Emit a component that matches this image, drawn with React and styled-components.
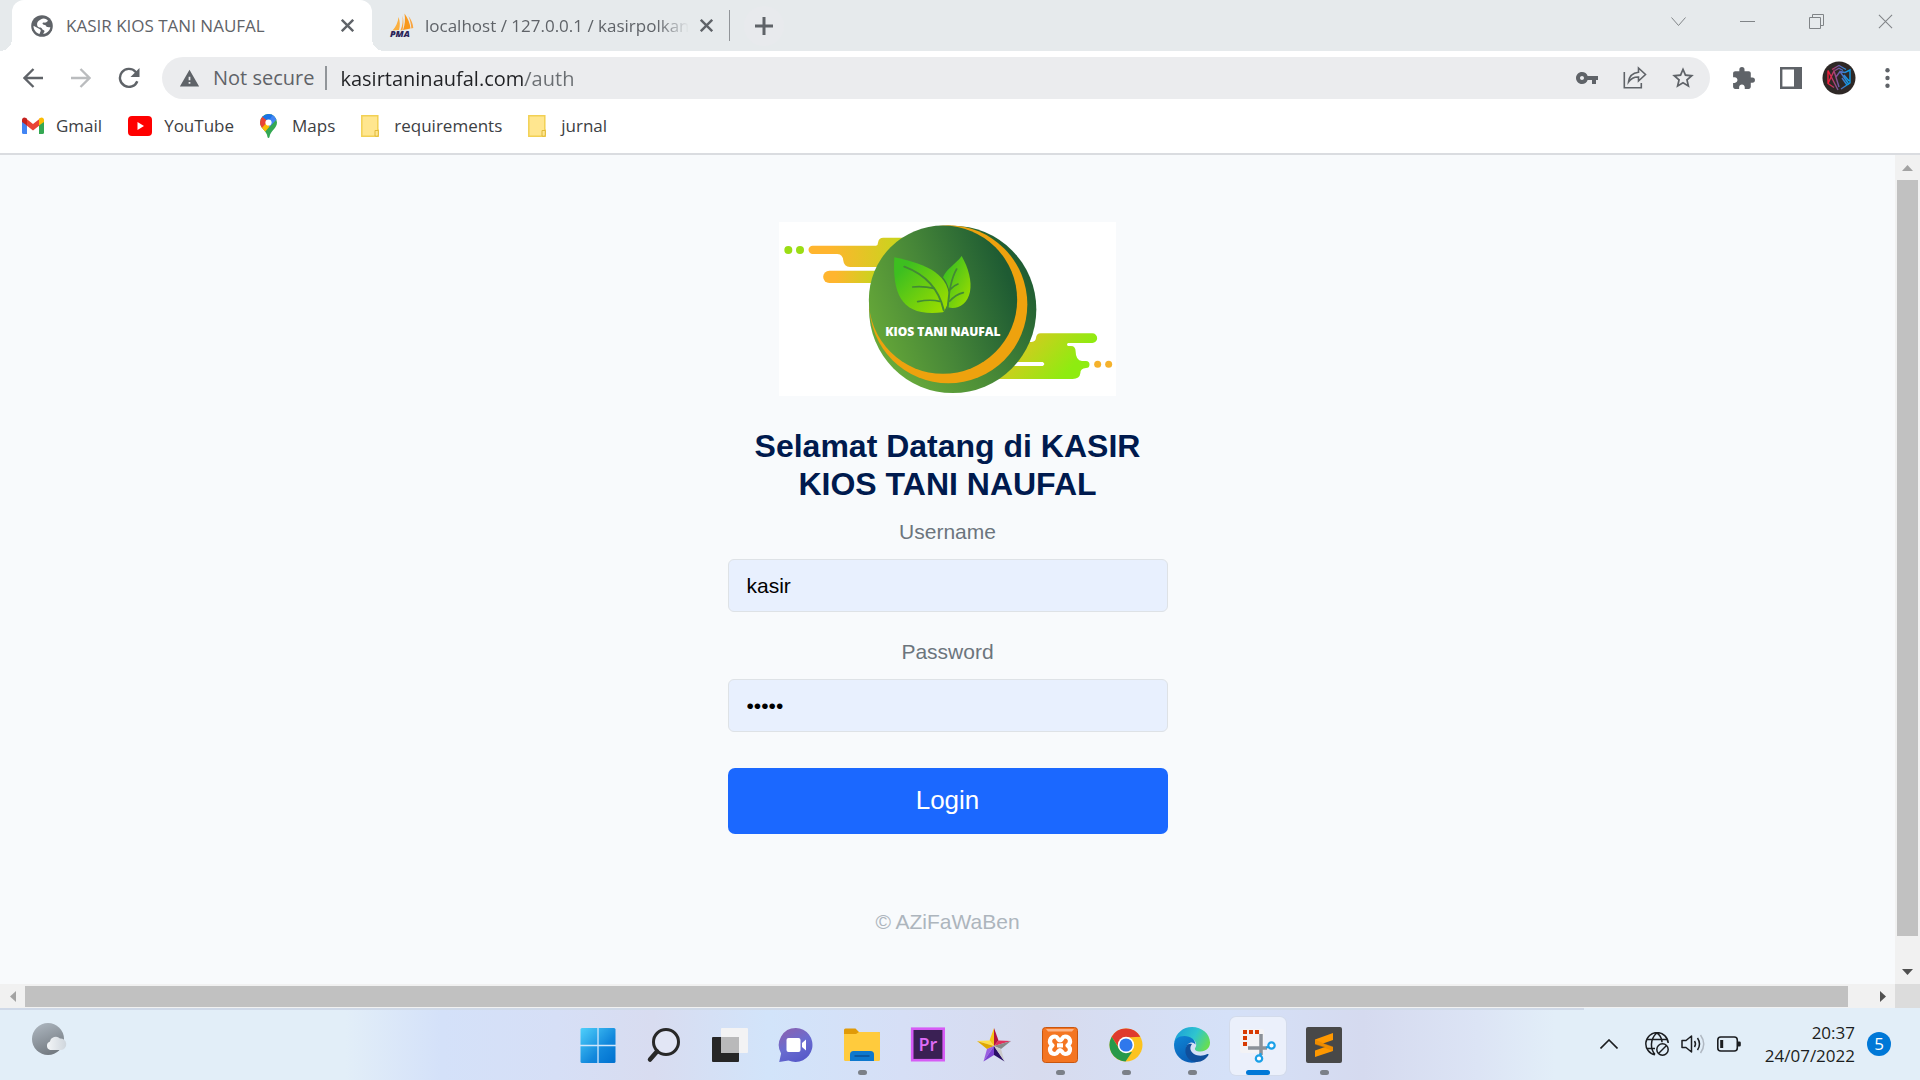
import React from "react";
import styled, { createGlobalStyle, css } from "styled-components";
import { MdVpnKey, MdStarBorder, MdExtension, MdWarning } from "react-icons/md";

const uiFont = `"Open Sans", "Noto Sans", sans-serif`;
const pageFont = `"Liberation Sans", Arial, sans-serif`;

const GlobalStyle = createGlobalStyle`
  *, *::before, *::after { box-sizing: border-box; }
  body { margin: 0; background: #fff; font-family: ${uiFont}; }
  button, input { font: inherit; color: inherit; margin: 0; }
  button { border: 0; background: none; padding: 0; cursor: pointer; }
  svg { display: block; flex: none; }
`;

const Screen = styled.div`
  display: flex;
  flex-direction: column;
  min-height: 100vh;
`;

/* ---------- Tab strip ---------- */

const TabStrip = styled.div`
  display: flex;
  align-items: stretch;
  height: 51px;
  padding-left: 12px;
  background: #e6eaec;
  color: #5f6368;
`;

const Tab = styled.div`
  position: relative;
  display: flex;
  align-items: center;
  gap: ${(p) => (p.$active ? 12 : 10)}px;
  width: ${(p) => (p.$active ? 360 : 357)}px;
  padding: 0 ${(p) => (p.$active ? 17 : 15)}px 0 18px;
  border-radius: 12px 12px 0 0;
  ${(p) =>
    p.$active &&
    css`
      background: #fff;
      &::before,
      &::after {
        content: "";
        position: absolute;
        bottom: 0;
        width: 12px;
        height: 12px;
      }
      &::before {
        left: -12px;
        background: radial-gradient(circle at 0 0, transparent 12px, #fff 12px);
      }
      &::after {
        right: -12px;
        background: radial-gradient(circle at 100% 0, transparent 12px, #fff 12px);
      }
    `}
`;

const TabTitle = styled.button`
  flex: 1;
  min-width: 0;
  overflow: hidden;
  text-align: left;
  white-space: nowrap;
  font-size: 17px;
  line-height: 24px;
  ${(p) =>
    p.$fade &&
    css`
      mask-image: linear-gradient(90deg, #000 calc(100% - 32px), transparent);
    `}
`;

const IconButton = styled.button`
  display: grid;
  place-items: center;
  width: ${(p) => p.$w || 15}px;
  height: ${(p) => p.$h || 24}px;
  flex: none;
`;

const Separator = styled.span`
  align-self: center;
  width: ${(p) => p.$w || 1}px;
  height: ${(p) => p.$h}px;
  background: #919599;
`;

const NewTab = styled.button`
  display: grid;
  place-items: center;
  align-self: center;
  width: 40px;
  height: 40px;
  margin-left: 14px;
  border-radius: 50%;
  background: #e8eaed;
`;

const WindowControls = styled.div`
  display: flex;
  margin-left: auto;
  color: #808487;
`;

const WindowButton = styled.button`
  display: grid;
  place-items: center;
  width: 69px;
  height: 43px;
`;

/* ---------- Toolbar ---------- */

const Toolbar = styled.div`
  display: flex;
  align-items: center;
  padding: 6px 9px;
  color: #5f6368;
`;

const NavButtons = styled.div`
  display: flex;
  width: 153px;
`;

const AddressBar = styled.label`
  display: flex;
  align-items: center;
  flex: 1;
  height: 42px;
  padding: 0 3px 0 17px;
  border-radius: 21px;
  background: #ebecee;
  font-size: 20px;
  line-height: 28px;
  white-space: nowrap;
`;

const SecurityNote = styled.span`
  margin: 0 11px 0 13px;
`;

const AddressInput = styled.input`
  flex: 1;
  min-width: 0;
  height: 30px;
  margin-left: 13px;
  padding: 0;
  border: 0;
  outline: 0;
  background: linear-gradient(90deg, #202124 ${(p) => p.$hostWidth}px, #6a6e72 ${(p) => p.$hostWidth}px);
  background-clip: text;
  -webkit-background-clip: text;
  -webkit-text-fill-color: transparent;
`;

const IconRow = styled.div`
  display: flex;
  align-items: center;
`;

const ToolbarActions = styled(IconRow)`
  margin-left: 9px;
`;

const Bookmarks = styled.nav`
  display: flex;
  align-items: center;
  gap: 26px;
  height: 50px;
  padding: 0 22px 6px;
  border-bottom: 2px solid #dadce0;
  color: #3c4043;
`;

const Bookmark = styled.a`
  display: flex;
  align-items: center;
  gap: ${(p) => p.$gap || 12}px;
  color: inherit;
  text-decoration: none;
  font-size: 17px;
  line-height: 24px;
`;

/* ---------- Page ---------- */

const Viewport = styled.div`
  flex: 1;
  display: grid;
  grid-template-columns: 1fr 25px;
  grid-template-rows: 1fr 24px;
`;

const Page = styled.main`
  display: flex;
  flex-direction: column;
  align-items: center;
  padding: 67px 0 40px;
  background: #f8fafc;
  font-family: ${pageFont};
  font-size: 21px;
  line-height: 30px;
  color: #6c757d;
`;

const LoginForm = styled.form`
  display: flex;
  flex-direction: column;
  width: 440px;
  text-align: center;
`;

const LogoLink = styled.a`
  align-self: center;
  background: #fff;
`;

const Title = styled.h1`
  margin: 31px 0 0;
  padding: 0 20px;
  font-size: 32px;
  line-height: 38px;
  font-weight: 700;
  color: #001a4e;
`;

const Field = styled.div`
  display: flex;
  flex-direction: column;
  gap: 12px;
  margin-top: ${(p) => p.$top}px;
`;

const TextInput = styled.input`
  height: 53px;
  padding: 0 18px;
  border: 1px solid #dee2e6;
  border-radius: 6px;
  background: #e8f0fe;
  color: #000;
  outline: 0;
`;

const LoginButton = styled.button`
  height: 66px;
  margin-top: 36px;
  padding-bottom: 2px;
  border-radius: 7px;
  background: #1b68ff;
  color: #fff;
  font-size: 26px;
`;

const Copyright = styled.p`
  margin: 73px 0 0;
  color: #adb5bd;
`;

const ScrollTrack = styled.div`
  display: flex;
  flex-direction: ${(p) => (p.$vertical ? "column" : "row")};
  padding: ${(p) => (p.$vertical ? "0 2px" : "2px 0 1px")};
  background: #f1f1f1;
`;

const ScrollArrow = styled.button`
  display: grid;
  place-items: center;
  flex: none;
  width: ${(p) => (p.$vertical ? 21 : 25)}px;
  height: ${(p) => (p.$vertical ? 25 : 21)}px;
`;

const ScrollThumb = styled.div`
  flex: ${(p) => p.$size};
  background: #c1c1c1;
`;

const ScrollSpace = styled.div`
  flex: ${(p) => p.$size};
`;

const ScrollCorner = styled.div`
  background: #dcdcdc;
`;

/* ---------- Taskbar ---------- */

const Taskbar = styled.footer`
  display: grid;
  grid-template-columns: 1fr auto 1fr;
  height: 72px;
  background:
    linear-gradient(#cfd9e8, #cfd9e8) 0 0 / 82.5% 2px no-repeat,
    linear-gradient(90deg, #e2eef8 18%, #d4e1f9 23%, #d6dff6 29%, #d8dcf0 34%, #d2e4fa 40%, #d6dff6 47%,
      #d7dbee 54%, #d5e1f8 64%, #d5daef 71%, #dce4f5 77%, #e2eef8 81%);
`;

const TaskbarLeft = styled.div`
  padding: 14px 0 0 31px;
`;

const Apps = styled.div`
  display: flex;
  gap: 10px;
  padding: 9px 0 5px 2px;
`;

const AppButton = styled.button`
  display: flex;
  flex-direction: column;
  align-items: center;
  justify-content: space-between;
  width: 56px;
  height: 58px;
  padding-top: 10px;
  border-radius: 6px;
  ${(p) =>
    p.$active &&
    css`
      background: #ebf0fb;
      box-shadow: 0 0 0 1px #d3dbeb;
    `}
`;

const RunMark = styled.span`
  width: ${(p) => (p.$active ? 24 : 9)}px;
  height: 5px;
  border-radius: 3px;
  background: ${(p) => (p.$active ? "#0078d7" : "#7b8088")};
`;

const Tray = styled.div`
  display: flex;
  justify-content: flex-end;
  align-items: center;
  padding-right: 29px;
  color: #1b1d20;
`;

const TrayIcons = styled.div`
  display: flex;
  gap: 12px;
  margin: 0 24px 0 26px;
`;

const Clock = styled.time`
  margin-right: 12px;
  text-align: right;
  font-size: 17px;
  line-height: 23px;
`;

const Badge = styled.span`
  display: grid;
  place-items: center;
  width: 24px;
  height: 24px;
  border-radius: 50%;
  background: #0078d7;
  color: #fff;
  font-size: 17px;
  line-height: 24px;
`;

/* ---------- Drawings ---------- */

const Cross = ({ size = 13, stroke = 2.4 }) => (
  <svg width={size} height={size} viewBox="0 0 13 13" stroke="currentColor" strokeWidth={stroke}>
    <path d="M.8.8 12.2 12.2M12.2.8.8 12.2" />
  </svg>
);

const GlobeFavicon = () => (
  <svg width="24" height="22" viewBox="0 0 22 22">
    <circle cx="11" cy="11" r="10.8" fill="#5f6368" />
    <path
      fill="#fff"
      d="M12.5 3.6c2.2.2 3.6 1.100 4.600 2.500-1 .2-1.400 1.300-2.500 1.500-1.300.2-1.500-.2-2.700.2-.8.400-.3 1.700.8 1.900 1.900.1 2.700 1 2.900 2.200 1.500.1 3 .2 3.800.5-.8 3.400-3.600 6-7 6.600-.3-1.200 1.300-1.700 1.100-3-.2-1-1.900-.8-2.300-2-.2-1-1.300-1.700-2.700-1.600-2-.1-2.500-1.600-2.400-3.400.1-2.600 3-4.600 6.400-5.400z"
    />
    <path fill="#fff" d="M2.500 10.800l6 3.200c1.300.7 1.600 1.700.9 2.700l-.9 2.300c-3.600-1.100-6.100-4.400-6-8.200z" />
  </svg>
);

const PmaIcon = () => (
  <svg width="25" height="26" viewBox="0 0 25 26" overflow="visible">
    <path fill="#f8981d" d="M14.500.5c3.500 5 5.500 10 6 15l-7.500 1.500c2-5 2.400-11 1.500-16.500z" />
    <path fill="#fbb040" d="M8.500 4c1.500 4.500 1.800 8.500.5 13l-6.500.5C6 13.500 8 9 8.500 4z" />
    <path fill="#f9a541" d="M12.500 2.500c.5 5 .2 10-2 14.700l2 .1c1-5 1.300-10 0-14.800zM18.500 3c3 4 4.500 8 4.800 12l-2 .6c-.2-4.500-1.300-8.500-2.800-12.600z" />
    <text x="0" y="24" fontFamily="Open Sans, sans-serif" fontWeight="800" fontStyle="italic" fontSize="9" fill="#2a2358">
      PMA
    </text>
  </svg>
);

const BackArrow = ({ flip, color = "#5f6368" }) => (
  <svg width="20" height="20" viewBox="0 0 20 20" fill="none" stroke={color} strokeWidth="2.3">
    <path d={flip ? "M0 10h18M9.500 1l9 9-9 9" : "M20 10H2M10.500 1l-9 9 9 9"} />
  </svg>
);

const ReloadIcon = () => (
  <svg width="22" height="22" viewBox="0 0 22 22">
    <path d="M19.3 14.2A9 9 0 1 1 17.500 4.700l2 2.500" fill="none" stroke="#5f6368" strokeWidth="2.4" />
    <path d="M21.5 1v9h-9z" fill="#5f6368" />
  </svg>
);

const ShareIcon = () => (
  <svg width="24" height="24" viewBox="0 0 24 24" fill="none" stroke="#5f6368" strokeWidth="1.6">
    <path d="M1.3 6v15.700h17V17" />
    <path d="M15.5 2l7 6.500-7 6.500v-4C11 10.800 8 12.500 5.500 16c.6-5.500 4-9 10-9.700z" />
  </svg>
);

const SidePanelIcon = () => (
  <svg width="22" height="22" viewBox="0 0 22 22">
    <path d="M1.2 1.200h19.600v19.600H1.200z" fill="#fff" stroke="#5f6368" strokeWidth="2.4" />
    <path d="M14 1h7v20h-7z" fill="#5f6368" />
  </svg>
);

const Avatar = () => (
  <svg width="34" height="34" viewBox="0 0 34 34">
    <defs>
      <linearGradient id="avatar" x1="6" x2="28" y1="0" y2="0" gradientUnits="userSpaceOnUse">
        <stop offset="0.05" stopColor="#f0203c" />
        <stop offset="0.5" stopColor="#6a5fae" />
        <stop offset="0.9" stopColor="#0f9be8" />
      </linearGradient>
    </defs>
    <circle cx="17" cy="17" r="16.5" fill="#2e2826" />
    <path
      d="M10 8.500l7-4 7 4M13 9.500l4-2.300 4 2.300M6 9.500v13l6 4M6 9.500l10 19.500M6 22.500l6-12.500 5 16M14 16l4-5.500 9 13M18 10.500l5 1 5-2.500v13l-9 6M22 14l5 6M20 17l5 7"
      fill="none"
      stroke="url(#avatar)"
      strokeWidth="1.4"
    />
  </svg>
);

const GmailIcon = () => (
  <svg width="22" height="18" viewBox="0 0 22 18">
    <path fill="#4285f4" d="M0 3h5v14H1.500A1.500 1.500 0 0 1 0 15.500z" />
    <path fill="#34a853" d="M17 3h5v12.500a1.500 1.500 0 0 1-1.500 1.500H17z" />
    <path fill="#ea4335" d="M4 1.500 11 7l7-5.500V8l-7 5.500L4 8z" />
    <path fill="#c5221f" d="M0 3C0 .8 2.200-.2 4 1l1 .7V8.500L0 5z" />
    <path fill="#fbbc04" d="M22 3c0-2.200-2.200-3.200-4-2l-1 .7v6.800L22 5z" />
  </svg>
);

const YouTubeIcon = () => (
  <svg width="24" height="20" viewBox="0 0 24 20">
    <rect width="24" height="20" rx="4" fill="#f00" />
    <path d="M9.500 6 16 10l-6.500 4z" fill="#fff" />
  </svg>
);

const MapsIcon = () => (
  <svg width="17" height="24" viewBox="0 0 17 24">
    <defs>
      <clipPath id="pin">
        <path d="M8.500 0A8.500 8.500 0 0 0 0 8.500C0 14.500 6.500 16 7.500 23c.2 1.300 1.800 1.300 2 0 1-7 7.500-8.500 7.500-14.500A8.500 8.500 0 0 0 8.500 0z" />
      </clipPath>
    </defs>
    <g clipPath="url(#pin)">
      <path fill="#34a853" d="M0 0h17v24H0z" />
      <path fill="#fbbc04" d="M-1 15 7 6l4 5-8 9z" />
      <path fill="#ea4335" d="M0 3l2-1 6 5-6.500 7.500L-1 12z" />
      <path fill="#1a73e8" d="M2 2.500 9-1l5 2-5 7z" />
      <path fill="#4285f4" d="M13 .5 17 5 9.500 13 8 8z" />
    </g>
    <circle cx="8.5" cy="8.5" r="3.1" fill="#fff" />
  </svg>
);

const FolderMark = () => (
  <svg width="18" height="22" viewBox="0 0 18 22">
    <path d="M.8.8h16v14.500h.7v6H.8z" fill="#ffe68f" stroke="#f2d054" strokeWidth="1.5" />
    <path d="M14 21v-5.500h3.300V20q0 1.300-1.300 1.300z" fill="#ffe68f" stroke="#e0b93a" />
  </svg>
);

const Triangle = ({ d, color, w = 11, h = 11 }) => (
  <svg width={w} height={h} viewBox={`0 0 ${w} ${h}`}>
    <path d={d} fill={color} />
  </svg>
);

const StoreLogo = () => (
  <svg width="337" height="174" viewBox="27 36 1011 522" role="img" aria-label="Kios Tani Naufal">
    <defs>
      <linearGradient id="trailL" x1="0" x2="1">
        <stop offset="0.2" stopColor="#ffb52e" />
        <stop offset="0.9" stopColor="#c6d61c" />
      </linearGradient>
      <linearGradient id="trailR" x1="0" x2="1" y1="0.3" y2="0.7">
        <stop offset="0" stopColor="#e8c124" />
        <stop offset="0.8" stopColor="#8eec10" />
      </linearGradient>
      <linearGradient id="disc" x1="0.1" y1="0.8" x2="0.9" y2="0.2">
        <stop offset="0" stopColor="#68aa3b" />
        <stop offset="0.35" stopColor="#4f9137" />
        <stop offset="1" stopColor="#1f5c33" />
      </linearGradient>
      <linearGradient id="face" x1="0" y1="0.7" x2="1" y2="0.35">
        <stop offset="0" stopColor="#66a838" />
        <stop offset="0.45" stopColor="#468638" />
        <stop offset="0.95" stopColor="#1e5b33" />
      </linearGradient>
      <linearGradient id="leaf" x1="0" y1="0.2" x2="0.8" y2="1">
        <stop offset="0.1" stopColor="#3dbf20" />
        <stop offset="1" stopColor="#98dc00" />
      </linearGradient>
    </defs>
    <g fill="#9bdd14">
      <circle cx="55" cy="120" r="12" />
      <circle cx="90" cy="120" r="12" />
    </g>
    <g fill="url(#trailL)">
      <path d="M128 107H318Q324 106 324 98 326 83 340 83H430V171H240Q222 170 220 152 218 132 202 132H128A12.500 12.500 0 0 1 128 107z" />
      <path d="M178 182H340V219H178A18.500 18.500 0 0 1 178 182z" />
    </g>
    <path
      fill="url(#trailR)"
      d="M720 396H785Q797 394 798 384 799 370 812 370H967A14.500 14.500 0 0 1 967 399H894Q888 404 894 408H903Q917 408 917 425 917 450 936 453H948A10.500 10.500 0 0 1 948 474Q931 475 931 490 929 507 908 507H680V468H818Q828 462 818 456H700z"
    />
    <g fill="#f5b22c">
      <circle cx="983" cy="463" r="10.5" />
      <circle cx="1016" cy="463" r="10.5" />
    </g>
    <circle cx="548" cy="298" r="251" fill="url(#disc)" />
    <circle cx="535" cy="283" r="237" fill="#eea20e" />
    <circle cx="519" cy="269" r="222.5" fill="url(#face)" />
    <g fill="url(#leaf)">
      <path d="M373 142C450 158 536 185 537 262 532 290 526 298 519 307 400 322 366 260 373 142z" />
      <path d="M575 138C596 175 606 215 600 245 592 285 560 300 534 292 546 245 533 220 519 202 530 175 555 165 575 138z" />
    </g>
    <g fill="none" stroke="#438a35" strokeWidth="5" strokeLinecap="round">
      <path d="M403 170C462 192 505 232 521 300" strokeWidth="6" />
      <path d="M428 231Q460 228 492 235M443 275Q480 267 509 274M560 177Q538 215 533 296M541 238Q552 226 564 222M539 274Q556 254 580 248" />
    </g>
    <text x="346" y="377" fontFamily="Open Sans, sans-serif" fontWeight="800" fontSize="36" fill="#fff">
      KIOS TANI NAUFAL
    </text>
  </svg>
);

const WeatherIcon = () => (
  <svg width="36" height="34" viewBox="0 0 36 34">
    <defs>
      <linearGradient id="moon" x1="0.3" y1="0" x2="0.7" y2="1">
        <stop offset="0" stopColor="#aab3bc" />
        <stop offset="1" stopColor="#70777e" />
      </linearGradient>
      <linearGradient id="cloud" x1="0" x2="1">
        <stop offset="0" stopColor="#f3f5f7" />
        <stop offset="1" stopColor="#cfd6dd" />
      </linearGradient>
    </defs>
    <circle cx="17" cy="17" r="16" fill="url(#moon)" />
    <path d="M19 28a4.500 4.500 0 0 1 0-8.500 6 6 0 0 1 10-3 5.500 5.500 0 0 1 1 11.500z" fill="url(#cloud)" />
  </svg>
);

const WindowsIcon = () => (
  <svg width="36" height="36" viewBox="0 0 36 36">
    <defs>
      <linearGradient id="win" x1="0" y1="0" x2="1" y2="1">
        <stop offset="0" stopColor="#4fd0fb" />
        <stop offset="0.6" stopColor="#1288dc" />
        <stop offset="1" stopColor="#0070cf" />
      </linearGradient>
    </defs>
    <rect x="0.5" y="1" width="35" height="35" rx="1.5" fill="url(#win)" />
    <path d="M18 1v35M0 18.500h36" stroke="#cfe6fb" strokeWidth="1.3" />
  </svg>
);

const SearchIcon = () => (
  <svg width="36" height="36" viewBox="0 0 36 36" fill="none" stroke="#282828">
    <circle cx="20" cy="15" r="12.5" strokeWidth="3" fill="#e2e6f5" />
    <path d="M11 24.500 4 32.500" strokeWidth="4.5" strokeLinecap="round" />
  </svg>
);

const TaskViewIcon = () => (
  <svg width="36" height="36" viewBox="0 0 36 36">
    <rect x="0" y="10" width="27" height="25" rx="1" fill="#262626" />
    <rect x="9" y="1" width="27" height="25" rx="1" fill="#f3f3f4" />
    <path d="M9 10h18v16H9z" fill="#b9b9ba" />
  </svg>
);

const ChatIcon = () => (
  <svg width="36" height="36" viewBox="0 0 36 36">
    <defs>
      <linearGradient id="chat" x1="0.2" y1="0" x2="0.7" y2="1">
        <stop offset="0" stopColor="#8a62b0" />
        <stop offset="0.5" stopColor="#6a6cd0" />
        <stop offset="1" stopColor="#5558c8" />
      </linearGradient>
    </defs>
    <path d="M18 1a17 17 0 1 1-7.500 32.500L1.200 35l1.900-8.500A17 17 0 0 1 18 1z" fill="url(#chat)" />
    <rect x="8.5" y="11" width="14" height="14" rx="2" fill="#fff" />
    <path d="M24 16l4-3.500v11L24 20z" fill="#fff" />
  </svg>
);

const ExplorerIcon = () => (
  <svg width="36" height="36" viewBox="0 0 36 36">
    <path d="M0 3q0-1.500 1.500-1.500h10L15 5h20.500V14H0z" fill="#e09a08" />
    <path d="M0 7h12l3-2h19.500Q36 5 36 6.500V32.500Q36 34 34.500 34h-33Q0 34 0 32.500z" fill="#ffcb3d" />
    <path d="M6 34V27.500Q6 24 9.500 24h17q3.500 0 3.500 3.500V34z" fill="#0d78ce" />
    <path d="M10.500 29h15" stroke="#0a4f95" strokeWidth="1.5" />
  </svg>
);

const PremiereIcon = () => (
  <svg width="36" height="36" viewBox="0 0 36 36">
    <rect x="2.2" y="1.7" width="31.5" height="31.5" fill="#3a2054" stroke="#d65cf5" strokeWidth="2.6" />
    <text x="17.8" y="23.5" textAnchor="middle" fontFamily="Open Sans, sans-serif" fontWeight="600" fontSize="18" fill="#df6cf8">
      Pr
    </text>
  </svg>
);

const StarAppIcon = () => (
  <svg width="36" height="36" viewBox="0 0 36 36">
    <path fill="#f5c518" d="M18 1v18L13.500 13.500z" />
    <path fill="#b3123f" d="M18 1l4.500 12.500L18 19z" />
    <path fill="#ffdf4a" d="M1 14l12.500-.5L18 19z" />
    <path fill="#e0a800" d="M1 14l17 5-7 3z" />
    <path fill="#e2305c" d="M35 14l-12.500-.5L18 19z" />
    <path fill="#888" d="M35 14l-17 5 7 3z" />
    <path fill="#9a5ee0" d="M7.500 34.500 11 22l7-3z" />
    <path fill="#7a3fd0" d="M7.500 34.500 18 19v9z" />
    <path fill="#2a0f66" d="M28.500 34.500 18 19v9z" />
    <path fill="#c9c9c9" d="M28.500 34.500 25 22l-7-3z" />
  </svg>
);

const XamppIcon = () => (
  <svg width="36" height="36" viewBox="0 0 36 36">
    <rect x="0.5" y="0.5" width="35" height="35" rx="3" fill="#f47521" stroke="#c8560f" />
    <path d="M4 2h28l-2 2.500H6z" fill="#fbb488" />
    <path
      d="M13 9.500c3 0 3 4 5 4s2-4 5-4c5 0 7 6 2.500 9 4.500 3 2.500 8.500-2.500 8.500-3 0-3-4-5-4s-2 4-5 4c-5 0-7-5.500-2.500-8.500-4.500-3-2.500-9 2.500-9zM15 18.300h6"
      fill="none"
      stroke="#fff"
      strokeWidth="4.2"
      strokeLinejoin="round"
    />
  </svg>
);

const ChromeIcon = () => (
  <svg width="36" height="36" viewBox="0 0 36 36">
    <circle cx="18" cy="18" r="16.5" fill="#fcc31e" />
    <path d="M3.700 9.700A16.500 16.500 0 0 1 32.300 9.700L18 10.500l-6.500 11.200z" fill="#df3a2d" />
    <path d="M3.700 9.700 11.500 22.200 18 26l6-1-6.500 9.500A16.500 16.500 0 0 1 3.700 9.700z" fill="#27994a" />
    <circle cx="18" cy="18" r="8.2" fill="#fff" />
    <circle cx="18" cy="18" r="6.6" fill="#2f78ec" />
  </svg>
);

const EdgeIcon = () => (
  <svg width="36" height="36" viewBox="0 0 36 36">
    <defs>
      <linearGradient id="edgeTop" x1="0" x2="1" y1="0.2" y2="0.6">
        <stop offset="0" stopColor="#1b9fd8" />
        <stop offset="0.55" stopColor="#2fc5cf" />
        <stop offset="1" stopColor="#66de52" />
      </linearGradient>
      <linearGradient id="edgeSide" x1="0" y1="0" x2="0.5" y2="1">
        <stop offset="0" stopColor="#0f86d6" />
        <stop offset="1" stopColor="#0a5eb5" />
      </linearGradient>
    </defs>
    <path d="M.3 15C2 6 9 0 18 0c10 0 18 7 18 15.500C36 21 32 24.500 26.500 24.500c-4.500 0-6-1.500-5.500-3.200 2-2.500 1.500-6-1-8C15 9 5 9.500.3 15z" fill="url(#edgeTop)" />
    <path d="M0 18C0 12 4.500 9 10.500 9c6 0 11 4 11 8.500-3-4-8.500-2-9 3.500C12 28 18 33.500 24 34.500 12 39 0 30 0 18z" fill="url(#edgeSide)" />
    <path d="M12.800 18.500c-4 7.500 1.200 16.500 10.200 16.500 5 0 9-3 11.500-7 .3-.8-.5-1.300-1.200-.9-7 3.400-15.500.9-16.800-4.600-.4-2 .3-4 1.500-5.500-2-.8-4-.3-5.200 1.500z" fill="#104f9c" />
  </svg>
);

const SnipIcon = () => (
  <svg width="36" height="36" viewBox="0 0 36 36">
    <rect x="0" y="2" width="24" height="24" rx="2" fill="#f3f3f5" />
    <path
      d="M3 3h4v4H3zM9 3h4v4H9zM15 3h4v4h-4zM3 9h4v4H3zM3 15h4v4H3z"
      fill="#d83b01"
    />
    <path d="M21 7v21M8 21h19" stroke="#8b9198" strokeWidth="3.5" />
    <g fill="#fff" stroke="#1aa0e8" strokeWidth="2.2">
      <circle cx="31.5" cy="18.5" r="3.2" />
      <circle cx="19" cy="31.5" r="3.2" />
    </g>
    <path d="M26 20.500l3-.5M20.500 26v3" stroke="#1aa0e8" strokeWidth="2" />
  </svg>
);

const SublimeIcon = () => (
  <svg width="36" height="36" viewBox="0 0 36 36">
    <rect width="36" height="36" rx="2" fill="#484848" />
    <path d="M9 12.500 27 6v7l-10 3.500 10 3.500v4L9 30v-6.500L19 20 9 17z" fill="#ff9800" />
    <path d="M9 12.500v5L27 24v-4.500L17 16z" fill="#e08000" opacity="0.5" />
  </svg>
);

const NoNetworkIcon = () => (
  <svg width="24" height="24" viewBox="0 0 24 24" fill="none" stroke="currentColor" strokeWidth="1.5">
    <path d="M10 22.800A11.200 11.200 0 1 1 23.200 11M12 .8C5 7 5 17 10 22.500M12 .8c3 2.500 5 6 5 9.500M2 7.500h20M2 16.500h8" />
    <circle cx="17.5" cy="17.5" r="5.7" />
    <path d="M13.5 21.500l8-8" />
  </svg>
);

const VolumeIcon = () => (
  <svg width="24" height="24" viewBox="0 0 24 24" fill="none" stroke="currentColor" strokeWidth="1.5">
    <path d="M1 8.500h4L10.500 4v16L5 15.500H1z" strokeLinejoin="round" />
    <path d="M13.5 9q2 3 0 6M16.500 6q4 6 0 12" />
    <path d="M19.5 3q6.500 9 0 18" stroke="#b0b8c2" />
  </svg>
);

const BatteryIcon = () => (
  <svg width="24" height="24" viewBox="0 0 24 24">
    <rect x="0.8" y="5" width="19.5" height="14" rx="3" fill="none" stroke="currentColor" strokeWidth="1.6" />
    <path d="M3.200 8h3v8h-3zM21 9.500h1.500q1.300 0 1.300 1.300v2.400q0 1.300-1.300 1.300H21z" fill="currentColor" />
  </svg>
);

const bookmarks = [
  { name: "Gmail", icon: <GmailIcon /> },
  { name: "YouTube", icon: <YouTubeIcon /> },
  { name: "Maps", icon: <MapsIcon />, gap: 15 },
  { name: "requirements", icon: <FolderMark />, gap: 15 },
  { name: "jurnal", icon: <FolderMark />, gap: 15 },
];

const apps = [
  { name: "Start", icon: <WindowsIcon /> },
  { name: "Search", icon: <SearchIcon /> },
  { name: "Task View", icon: <TaskViewIcon /> },
  { name: "Chat", icon: <ChatIcon /> },
  { name: "File Explorer", icon: <ExplorerIcon />, running: true },
  { name: "Premiere Pro", icon: <PremiereIcon /> },
  { name: "Star", icon: <StarAppIcon /> },
  { name: "XAMPP", icon: <XamppIcon />, running: true },
  { name: "Chrome", icon: <ChromeIcon />, running: true },
  { name: "Edge", icon: <EdgeIcon />, running: true },
  { name: "Snipping Tool", icon: <SnipIcon />, running: true, active: true },
  { name: "Sublime Text", icon: <SublimeIcon />, running: true },
];

export default function App() {
  return (
    <Screen>
      <GlobalStyle />

      <TabStrip>
        <Tab $active>
          <GlobeFavicon />
          <TabTitle>KASIR KIOS TANI NAUFAL</TabTitle>
          <IconButton aria-label="Close tab"><Cross /></IconButton>
        </Tab>
        <Tab>
          <PmaIcon />
          <TabTitle $fade>localhost / 127.0.0.1 / kasirpolkan</TabTitle>
          <IconButton aria-label="Close tab"><Cross /></IconButton>
        </Tab>
        <Separator $h={31} />
        <NewTab aria-label="New tab">
          <svg width="18" height="18" viewBox="0 0 18 18" stroke="currentColor" strokeWidth="3">
            <path d="M9 0v18M0 9h18" />
          </svg>
        </NewTab>
        <WindowControls>
          <WindowButton aria-label="Search tabs">
            <svg width="15" height="9" viewBox="0 0 15 9" fill="none" stroke="currentColor">
              <path d="M.5.5l7 8 7-8" />
            </svg>
          </WindowButton>
          <WindowButton aria-label="Minimize">
            <svg width="15" height="1" viewBox="0 0 15 1"><path d="M0 0h15v1H0z" fill="currentColor" /></svg>
          </WindowButton>
          <WindowButton aria-label="Restore">
            <svg width="15" height="15" viewBox="0 0 15 15" fill="none" stroke="currentColor">
              <path d="M.5 3.500h11v11H.5zM3.500 3.500V.5h11v11h-3" />
            </svg>
          </WindowButton>
          <WindowButton aria-label="Close">
            <Cross size={15} stroke={0.9} />
          </WindowButton>
        </WindowControls>
      </TabStrip>

      <Toolbar>
        <NavButtons>
          <IconButton $w={48} $h={42} aria-label="Back"><BackArrow /></IconButton>
          <IconButton $w={48} $h={42} aria-label="Forward"><BackArrow flip color="#babcbe" /></IconButton>
          <IconButton $w={48} $h={42} aria-label="Reload"><ReloadIcon /></IconButton>
        </NavButtons>
        <AddressBar>
          <MdWarning size={21} />
          <SecurityNote>Not secure</SecurityNote>
          <Separator $w={2} $h={24} />
          <AddressInput $hostWidth={185} aria-label="Address" defaultValue="kasirtaninaufal.com/auth" />
          <IconRow>
            <IconButton $w={48} $h={42} aria-label="Passwords"><MdVpnKey size={24} /></IconButton>
            <IconButton $w={48} $h={42} aria-label="Share"><ShareIcon /></IconButton>
            <IconButton $w={48} $h={42} aria-label="Bookmark"><MdStarBorder size={26} /></IconButton>
          </IconRow>
        </AddressBar>
        <ToolbarActions>
          <IconButton $w={48} $h={42} aria-label="Extensions"><MdExtension size={25} /></IconButton>
          <IconButton $w={48} $h={42} aria-label="Side panel"><SidePanelIcon /></IconButton>
          <IconButton $w={48} $h={42} aria-label="Profile"><Avatar /></IconButton>
          <IconButton $w={48} $h={42} aria-label="Menu">
            <svg width="5" height="20" viewBox="0 0 5 20" fill="currentColor">
              <circle cx="2.5" cy="2.3" r="2.2" />
              <circle cx="2.5" cy="10" r="2.2" />
              <circle cx="2.5" cy="17.7" r="2.2" />
            </svg>
          </IconButton>
        </ToolbarActions>
      </Toolbar>

      <Bookmarks>
        {bookmarks.map((b) => (
          <Bookmark key={b.name} href="#" $gap={b.gap}>
            {b.icon}
            {b.name}
          </Bookmark>
        ))}
      </Bookmarks>

      <Viewport>
        <Page>
          <LoginForm onSubmit={(e) => e.preventDefault()}>
            <LogoLink href="#"><StoreLogo /></LogoLink>
            <Title>Selamat Datang di KASIR KIOS TANI NAUFAL</Title>
            <Field $top={14}>
              <label htmlFor="username">Username</label>
              <TextInput id="username" type="text" defaultValue="kasir" />
            </Field>
            <Field $top={25}>
              <label htmlFor="password">Password</label>
              <TextInput id="password" type="password" defaultValue="kasir" />
            </Field>
            <LoginButton type="submit">Login</LoginButton>
            <Copyright>© AZiFaWaBen</Copyright>
          </LoginForm>
        </Page>
        <ScrollTrack $vertical>
          <ScrollArrow $vertical aria-label="Scroll up"><Triangle d="M5.500 0 11 6H0z" h={6} color="#a3a3a3" /></ScrollArrow>
          <ScrollThumb $size={756} />
          <ScrollSpace $size={23} />
          <ScrollArrow $vertical aria-label="Scroll down"><Triangle d="M5.500 6 11 0H0z" h={6} color="#505050" /></ScrollArrow>
        </ScrollTrack>
        <ScrollTrack>
          <ScrollArrow aria-label="Scroll left"><Triangle d="M0 5.500 6 0v11z" w={6} color="#a3a3a3" /></ScrollArrow>
          <ScrollThumb $size={1823} />
          <ScrollSpace $size={22} />
          <ScrollArrow aria-label="Scroll right"><Triangle d="M6 5.500 0 0v11z" w={6} color="#505050" /></ScrollArrow>
        </ScrollTrack>
        <ScrollCorner />
      </Viewport>

      <Taskbar>
        <TaskbarLeft>
          <IconButton $w={36} $h={34} aria-label="Weather"><WeatherIcon /></IconButton>
        </TaskbarLeft>
        <Apps>
          {apps.map((a) => (
            <AppButton key={a.name} aria-label={a.name} $active={a.active}>
              {a.icon}
              {a.running && <RunMark $active={a.active} />}
            </AppButton>
          ))}
        </Apps>
        <Tray>
          <IconButton $w={20} aria-label="Hidden icons">
            <svg width="18" height="10" viewBox="0 0 18 10" fill="none" stroke="currentColor" strokeWidth="1.6">
              <path d="M.5 9.500 9 1l8.500 8.500" />
            </svg>
          </IconButton>
          <TrayIcons>
            <NoNetworkIcon />
            <VolumeIcon />
            <BatteryIcon />
          </TrayIcons>
          <Clock>20:37<br />24/07/2022</Clock>
          <Badge>5</Badge>
        </Tray>
      </Taskbar>
    </Screen>
  );
}
